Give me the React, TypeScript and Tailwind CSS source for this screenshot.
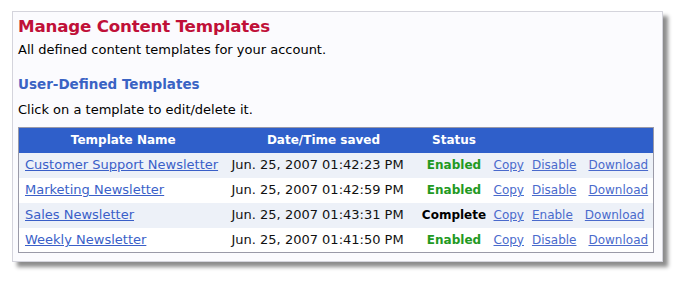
import React from 'react';

const rows = [
    { name: 'Customer Support Newsletter', saved: 'Jun. 25, 2007 01:42:23 PM', status: 'Enabled', toggle: 'Disable' },
    { name: 'Marketing Newsletter', saved: 'Jun. 25, 2007 01:42:59 PM', status: 'Enabled', toggle: 'Disable' },
    { name: 'Sales Newsletter', saved: 'Jun. 25, 2007 01:43:31 PM', status: 'Complete', toggle: 'Enable' },
    { name: 'Weekly Newsletter', saved: 'Jun. 25, 2007 01:41:50 PM', status: 'Enabled', toggle: 'Disable' },
];

export default function App() {
    return (
        <div className="w-[681px] h-[281px] bg-white pt-[11px] pl-[12px]" style={{ fontFamily: '"DejaVu Sans", Verdana, sans-serif' }}>
            <div className="w-[651px] h-[251px] bg-[#fbfbfe] border border-[#d4d4dc] shadow-[5px_5px_4px_rgba(0,0,0,0.45)] px-[5px]">
                <h1 className="text-[16.7px] font-bold text-[#c01038] leading-[20px] mt-[4px] tracking-[-0.2px]">Manage Content Templates</h1>
                <p className="text-[13px] text-black leading-[18px] mt-[5px]">All defined content templates for your account.</p>
                <h2 className="text-[13.5px] font-bold text-[#3a63c4] leading-[18px] mt-[16px]">User-Defined Templates</h2>
                <p className="text-[13px] text-black leading-[18px] mt-[8px]">Click on a template to edit/delete it.</p>

                <table className="mt-[8px] w-[636px] border border-[#9a9aa8] border-collapse text-[13px] table-fixed">
                    <thead>
                        <tr className="bg-[#2f5fca] text-white font-bold text-[12px] h-[25px]">
                            <th className="w-[209px] text-center">Template Name</th>
                            <th className="w-[192px] text-center">Date/Time saved</th>
                            <th className="w-[69px] text-center">Status</th>
                            <th></th>
                        </tr>
                    </thead>
                    <tbody>
                        {rows.map((r, i) => (
                            <tr key={r.name} className={`h-[25px] ${i % 2 === 0 ? 'bg-[#edf1f8]' : 'bg-white'}`}>
                                <td className="pl-[6px] whitespace-nowrap">
                                    <a href="#" className="text-[#3a5fc8] underline">{r.name}</a>
                                </td>
                                <td className="pl-[4px] text-[#111] whitespace-nowrap">{r.saved}</td>
                                <td className={`text-center font-bold text-[12px] whitespace-nowrap ${r.status === 'Enabled' ? 'text-[#229922]' : 'text-black'}`}>{r.status}</td>
                                <td className="whitespace-nowrap text-[12px] pl-[5px]">
                                    <a href="#" className="text-[#4a6acc] underline">Copy</a>
                                    <a href="#" className="text-[#4a6acc] underline ml-[8px]">{r.toggle}</a>
                                    <a href="#" className="text-[#4a6acc] underline ml-[12px]">Download</a>
                                </td>
                            </tr>
                        ))}
                    </tbody>
                </table>
            </div>
        </div>
    );
}
